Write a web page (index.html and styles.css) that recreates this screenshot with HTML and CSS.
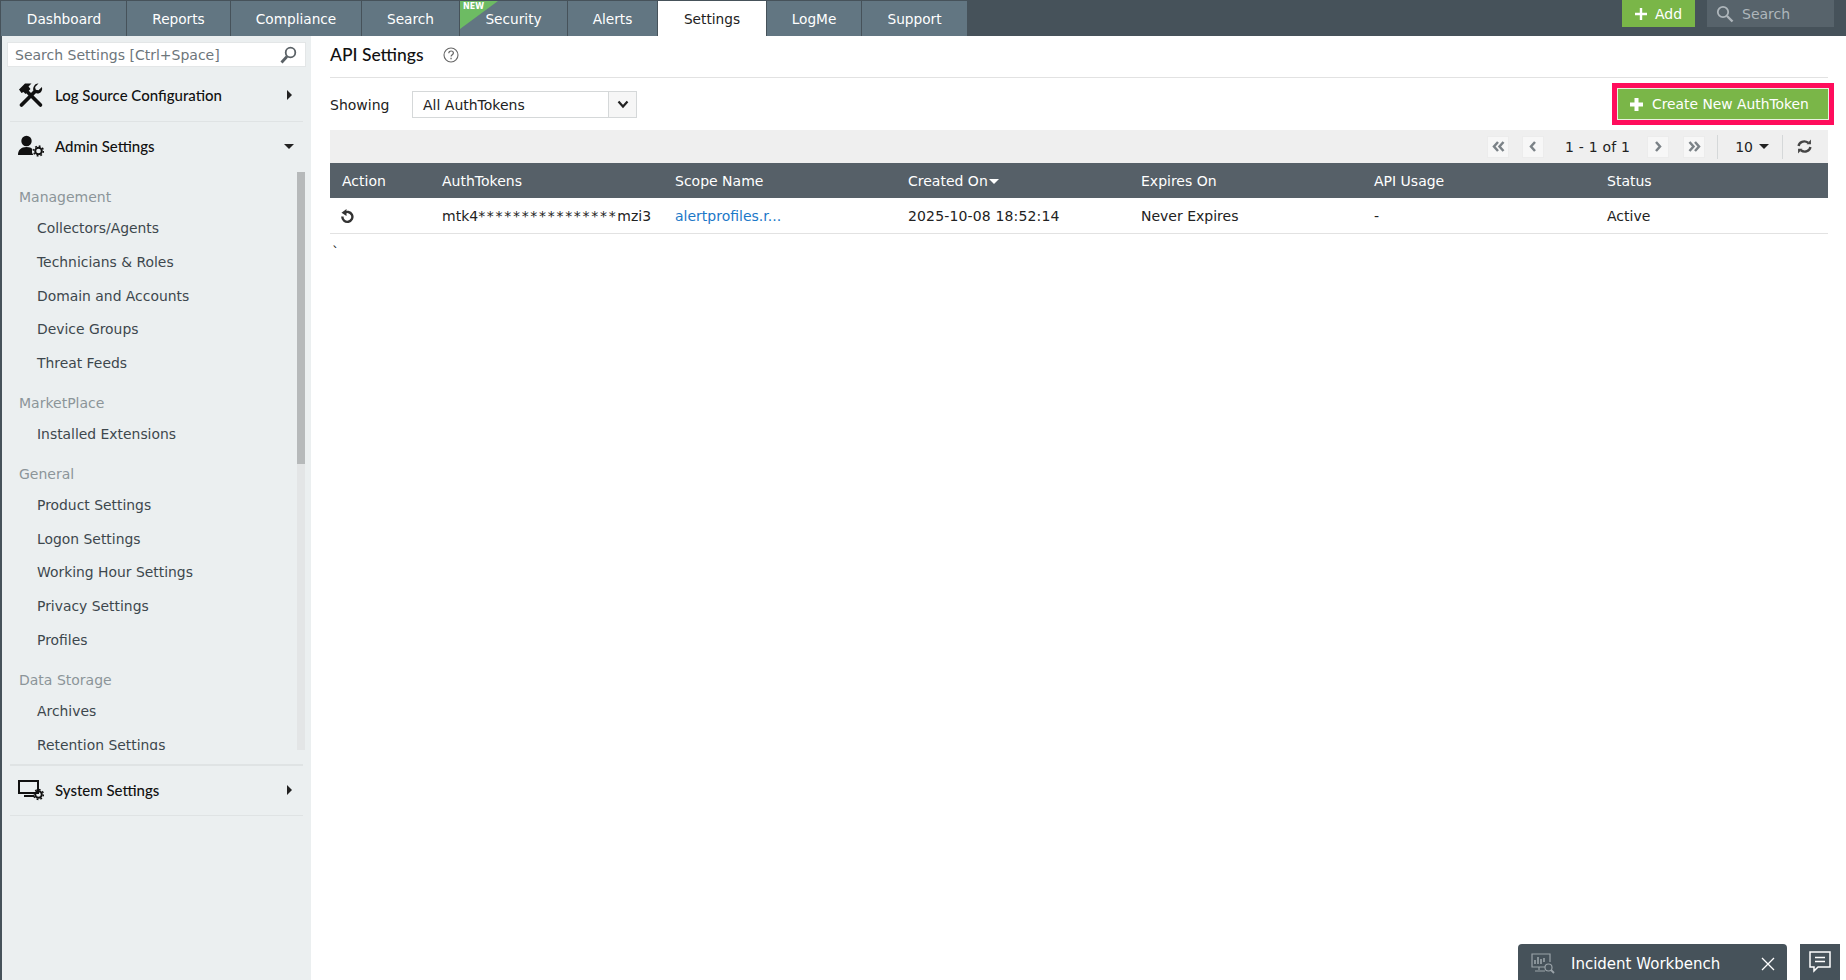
FILE: index.html
```html
<!DOCTYPE html>
<html lang="en">
<head>
    <meta charset="UTF-8">
    <meta name="viewport" content="width=device-width, initial-scale=1.0">
    <title>API Settings</title>
    <link rel="stylesheet" href="styles.css">
</head>
<body>
    <div class="topbar">
        <div class="tabs">
            <div class="tab t-dashboard">Dashboard</div>
            <div class="tab t-reports">Reports</div>
            <div class="tab t-compliance">Compliance</div>
            <div class="tab t-search">Search</div>
            <div class="tab t-security">
                <svg class="new-flag" width="38" height="28" viewBox="0 0 38 28"><path d="M0 0H38L0 28Z" fill="#6dbb63"/></svg>
                <span class="new-text">NEW</span>
                Security
            </div>
            <div class="tab t-alerts">Alerts</div>
            <div class="tab t-settings active">Settings</div>
            <div class="tab t-logme">LogMe</div>
            <div class="tab t-support">Support</div>
        </div>
        <div class="top-actions">
            <div class="add-btn">
                <svg width="12" height="12" viewBox="0 0 12 12"><path d="M4.800 0h2.400v4.800H12v2.400H7.200V12H4.800V7.200H0V4.800h4.800z" fill="#fff"/></svg>
                <span>Add</span>
            </div>
            <div class="top-search">
                <svg width="18" height="18" viewBox="0 0 18 18" fill="none" stroke="#aeb6bb" stroke-width="1.800"><circle cx="7" cy="7" r="5.200"/><path d="M11 11l5.500 5.500" stroke-width="2.400"/></svg>
                <span>Search</span>
            </div>
        </div>
    </div>

    <div class="page">
        <div class="sidebar">
            <div class="side-search">
                <span>Search Settings [Ctrl+Space]</span>
                <svg width="17" height="18" viewBox="0 0 17 18" fill="none" stroke="#5a6166"><circle cx="10.500" cy="6.500" r="4.800" stroke-width="1.800"/><path d="M7 10.500L1.500 16.500" stroke-width="2.800"/></svg>
            </div>

            <div class="side-head first">
                <svg class="side-icon" width="26" height="26" viewBox="0 0 26 26">
                    <path d="M1 7.500L7 1.500h6.500L10.500 4.500l2 2.500-5 5-2-2-2 1z" fill="#111"/>
                    <path d="M9 9.500L22.500 23" stroke="#111" stroke-width="3.600" stroke-linecap="round"/>
                    <path d="M3.500 23L17 9.500" stroke="#111" stroke-width="3.800" stroke-linecap="round"/>
                    <path d="M20.500 1.500l-3.400 3.400.6 2.800 2.800.6 3.400-3.400c1 3.400-1.300 7-5.200 6.600l-3.500-3.500c-.4-3.900 2.600-7 5.300-6.500z" fill="#111"/>
                </svg>
                <span class="side-title">Log Source Configuration</span>
                <span class="arrow-right"></span>
            </div>
            <div class="side-head second">
                <svg class="side-icon" width="26" height="22" viewBox="0 0 26 22"><circle cx="8.500" cy="6" r="5.200" fill="#111"/><path d="M0 20c0-5 3-8 8.500-8 3 0 4.800.8 6 2.200-1 2.300-.5 4.300 1 5.800H0z" fill="#111"/><circle cx="20.500" cy="16" r="3.300" fill="none" stroke="#111" stroke-width="2"/><circle cx="20.500" cy="16" r="4.900" fill="none" stroke="#111" stroke-width="1.500" stroke-dasharray="1.800 2"/></svg>
                <span class="side-title">Admin Settings</span>
                <span class="arrow-down"></span>
            </div>

            <div class="side-scroll">
                <div class="side-list">
                    <div class="group-label g-first">Management</div>
                    <div class="side-link">Collectors/Agents</div>
                    <div class="side-link">Technicians &amp; Roles</div>
                    <div class="side-link">Domain and Accounts</div>
                    <div class="side-link">Device Groups</div>
                    <div class="side-link">Threat Feeds</div>
                    <div class="group-label">MarketPlace</div>
                    <div class="side-link">Installed Extensions</div>
                    <div class="group-label">General</div>
                    <div class="side-link">Product Settings</div>
                    <div class="side-link">Logon Settings</div>
                    <div class="side-link">Working Hour Settings</div>
                    <div class="side-link">Privacy Settings</div>
                    <div class="side-link">Profiles</div>
                    <div class="group-label">Data Storage</div>
                    <div class="side-link">Archives</div>
                    <div class="side-link">Retention Settings</div>
                </div>
                <div class="scroll-track"><div class="scroll-thumb"></div></div>
            </div>

            <div class="side-head third">
                <svg class="side-icon" width="26" height="22" viewBox="0 0 26 22"><path d="M1 2h19v12H1z" fill="none" stroke="#111" stroke-width="2"/><path d="M6 16h10v2H6z" fill="#111"/><circle cx="20.500" cy="15.500" r="3.300" fill="none" stroke="#111" stroke-width="2"/><circle cx="20.500" cy="15.500" r="4.900" fill="none" stroke="#111" stroke-width="1.500" stroke-dasharray="1.800 2"/></svg>
                <span class="side-title">System Settings</span>
                <span class="arrow-right"></span>
            </div>
        </div>

        <div class="main">
            <div class="title-row">
                <h1>API Settings</h1>
                <svg width="16" height="16" viewBox="0 0 16 16" fill="none"><circle cx="8" cy="8" r="7" stroke="#666" stroke-width="1.100"/><path d="M5.800 6.200c0-3 4.600-2.800 4.600-.2 0 1.700-2.300 1.800-2.300 3.500" stroke="#666" stroke-width="1.200"/><path d="M7.400 10.800h1.300v1.400H7.400z" fill="#666"/></svg>
            </div>

            <div class="filter-row">
                <span class="showing">Showing</span>
                <div class="select-box">
                    <span class="select-value">All AuthTokens</span>
                    <span class="select-btn">
                        <svg width="12" height="9" viewBox="0 0 12 9" fill="none"><path d="M1.500 1.500L6 6.500l4.500-5" stroke="#222" stroke-width="2.200"/></svg>
                    </span>
                </div>
                <div class="create-wrap">
                    <div class="create-btn">
                        <svg width="13" height="13" viewBox="0 0 13 13"><path d="M4.500 0h4v4.500H13v4H8.500V13h-4V8.500H0v-4h4.500z" fill="#fff"/></svg>
                        <span>Create New AuthToken</span>
                    </div>
                </div>
            </div>

            <div class="pager">
                <span class="page-btn"><svg width="13" height="11" viewBox="0 0 13 11" fill="none" stroke="#7b8287" stroke-width="2.500"><path d="M6 1L2 5.500l4 4.500M11.500 1l-4 4.500 4 4.500"/></svg></span>
                <span class="page-btn prev"><svg width="8" height="11" viewBox="0 0 8 11" fill="none" stroke="#7b8287" stroke-width="2.500"><path d="M6 1L2 5.500l4 4.500"/></svg></span>
                <span class="page-count">1 - 1 of 1</span>
                <span class="page-btn gap-next"><svg width="8" height="11" viewBox="0 0 8 11" fill="none" stroke="#7b8287" stroke-width="2.500"><path d="M2 1l4 4.500-4 4.500"/></svg></span>
                <span class="page-btn next"><svg width="13" height="11" viewBox="0 0 13 11" fill="none" stroke="#7b8287" stroke-width="2.500"><path d="M1.500 1l4 4.500-4 4.500M7 1l4 4.500-4 4.500"/></svg></span>
                <span class="page-sep"></span>
                <span class="page-size">10</span>
                <span class="caret-dark"></span>
                <span class="page-sep sep2"></span>
                <svg class="refresh" width="15" height="15" viewBox="0 0 14 14" fill="none" stroke="#444" stroke-width="2.200"><path d="M1.500 6.500C2 3 6.500.8 10.500 3.500"/><path d="M12.500 7.500c-.5 3.500-5 5.700-9 3"/><path d="M9 5l4-.2V.5zM5 9l-4 .2v4.300z" fill="#444" stroke="none"/></svg>
            </div>

            <table class="token-table">
                <thead>
                    <tr>
                        <th class="col-action">Action</th>
                        <th>AuthTokens</th>
                        <th>Scope Name</th>
                        <th>Created On<span class="caret-white"></span></th>
                        <th>Expires On</th>
                        <th>API Usage</th>
                        <th>Status</th>
                    </tr>
                </thead>
                <tbody>
                    <tr>
                        <td class="col-action">
                            <svg class="undo" width="14" height="15" viewBox="0 0 14 15" fill="none"><path d="M4 4.200a5 5 0 1 1-1.600 3.300" stroke="#333" stroke-width="2.400"/><path d="M6.500 0v7L1.500 3.800z" fill="#333"/></svg>
                        </td>
                        <td>mtk4<span class="stars">****************</span>mzi3</td>
                        <td><span class="link">alertprofiles.r...</span></td>
                        <td class="date">2025-10-08 18:52:14</td>
                        <td>Never Expires</td>
                        <td>-</td>
                        <td>Active</td>
                    </tr>
                </tbody>
            </table>
            <div class="stray">`</div>
        </div>
    </div>

    <div class="workbench">
        <svg width="24" height="22" viewBox="0 0 24 22" fill="none" stroke="#9aa3a8" stroke-width="1.200"><path d="M14 14H1V1h18v8"/><path d="M4 11V7M7 11V4M10 11V6M13 9V5" stroke-width="1.600"/><path d="M8 14v3M4 18h10"/><circle cx="17.500" cy="14.500" r="3.500"/><path d="M20 17l3 3" stroke-width="1.800"/></svg>
        <span class="wb-title">Incident Workbench</span>
        <svg width="14" height="14" viewBox="0 0 14 14" stroke="#fff" stroke-width="1.300"><path d="M1 1l12 12M13 1L1 13"/></svg>
    </div>
    <div class="chat-box">
        <svg width="24" height="24" viewBox="0 0 24 24" fill="none" stroke="#fff" stroke-width="1.500"><path d="M2 2h20v15H10l-4 4v-4H2z"/><path d="M7 7.500h10M7 11.500h10"/></svg>
    </div>
</body>
</html>
```

FILE: styles.css
```css
* {
    margin: 0;
    padding: 0;
    box-sizing: border-box;
}

html, body {
    height: 100%;
    overflow: hidden;
}

body {
    font-family: 'DejaVu Sans', Verdana, sans-serif;
    font-size: 14px;
    color: #222;
    background: white;
    display: flex;
    flex-direction: column;
}

/* top bar */
.topbar {
    height: 36px;
    flex: none;
    background: #46525a;
    display: flex;
    justify-content: space-between;
    padding-left: 1px;
}

.tabs {
    display: flex;
    padding-top: 1px;
}

.tab {
    position: relative;
    background: #627682;
    color: white;
    margin-right: 1px;
    display: flex;
    align-items: center;
    justify-content: center;
    font-size: 13.7px;
    padding-top: 1px;
}

.t-dashboard { width: 125px; padding-left: 1px; }
.t-reports { width: 103px; }
.t-compliance { width: 130px; }
.t-search { width: 97px; }
.t-security { width: 107px; }
.t-alerts { width: 89px; }
.t-settings { width: 108px; }
.t-logme { width: 94px; }
.t-support { width: 105px; margin-right: 0; }

.tab.active {
    background: white;
    color: #222;
}

.new-flag {
    position: absolute;
    left: 0;
    top: 0;
}

.new-text {
    position: absolute;
    left: 3px;
    top: 1px;
    font-size: 8px;
    font-weight: bold;
    color: white;
}

.top-actions {
    display: flex;
    align-items: flex-start;
    padding-right: 12px;
}

.add-btn {
    width: 73px;
    height: 27px;
    background: #7ab648;
    color: white;
    display: flex;
    align-items: center;
    justify-content: center;
    gap: 8px;
    margin-right: 12px;
}

.top-search {
    width: 127px;
    height: 27px;
    background: #57636b;
    color: #aeb6bb;
    display: flex;
    align-items: center;
    gap: 8px;
    padding-left: 9px;
}

/* sidebar */
.page {
    flex: 1;
    display: flex;
    min-height: 0;
}

.sidebar {
    width: 311px;
    flex: none;
    background: #ebeff0;
    border-left: 2px solid #46525a;
    padding: 6px 5px 0 5px;
}

.side-search {
    height: 25px;
    background: white;
    border: 1px solid #e3e6e7;
    color: #6d767b;
    display: flex;
    align-items: center;
    justify-content: space-between;
    padding: 0 8px 0 7px;
}

.side-head {
    display: flex;
    align-items: center;
    margin: 0 3px 0 3px;
    height: 43px;
    padding: 0 8px 0 8px;
}

.side-head.first {
    height: 55px;
    padding-top: 1px;
    border-bottom: 1px solid #dfe3e4;
}

.side-head.second {
    height: 50px;
    padding-bottom: 2px;
}

.side-head.third {
    height: 52px;
    border-top: 2px solid #dfe3e4;
    border-bottom: 1px solid #dfe3e4;
    margin-top: 14px;
    padding-bottom: 2px;
}

.side-icon {
    flex: none;
    margin-right: 11px;
}

.side-title {
    flex: 1;
    font-family: Lato, sans-serif;
    font-size: 15px;
    font-weight: 500;
    color: #111;
}

.arrow-right {
    width: 0;
    height: 0;
    border-left: 5px solid #222;
    border-top: 5px solid transparent;
    border-bottom: 5px solid transparent;
    margin-right: 3px;
}

.arrow-down {
    width: 0;
    height: 0;
    border-top: 5px solid #222;
    border-left: 5px solid transparent;
    border-right: 5px solid transparent;
    margin-right: 1px;
}

.side-scroll {
    display: flex;
    justify-content: space-between;
    height: 578px;
    padding-right: 1px;
}

.side-list {
    flex: 1;
    overflow: hidden;
    padding-left: 12px;
}

.group-label {
    color: #8c9599;
    height: 24px;
    line-height: 24px;
    margin-top: 10px;
    margin-bottom: 3px;
}

.group-label.g-first {
    margin-top: 13px;
}

.side-link {
    color: #3d474d;
    height: 33.800px;
    line-height: 33.800px;
    padding-left: 18px;
    font-size: 13.900px;
}

.scroll-track {
    width: 8px;
    flex: none;
    background: #e3e5e6;
}

.scroll-thumb {
    height: 292px;
    background: #b6b9ba;
}

/* main area */
.main {
    flex: 1;
    min-width: 0;
    padding: 0 18px 0 19px;
}

.title-row {
    height: 42px;
    border-bottom: 1px solid #e2e2e2;
    display: flex;
    align-items: center;
    gap: 19px;
    padding-bottom: 4px;
}

.title-row h1 {
    font-family: Lato, sans-serif;
    font-size: 17.500px;
    font-weight: 500;
    color: #111;
}

.filter-row {
    height: 52px;
    display: flex;
    align-items: center;
}

.showing {
    width: 82px;
    padding-top: 1px;
}

.select-box {
    width: 225px;
    height: 27px;
    border: 1px solid #d5d8d9;
    display: flex;
}

.select-value {
    flex: 1;
    line-height: 26px;
    padding-left: 10px;
}

.select-btn {
    width: 28px;
    border-left: 1px solid #d5d8d9;
    background: #f6f6f6;
    display: flex;
    align-items: center;
    justify-content: center;
}

.create-wrap {
    margin-left: auto;
    margin-right: -6px;
    padding: 5px 5px;
    background: #ff0d5c;
}

.create-btn {
    width: 212px;
    height: 32px;
    background: #7ab648;
    border: 1px solid #e8f2de;
    color: white;
    display: flex;
    align-items: center;
    gap: 9px;
    padding-left: 12px;
    font-size: 13.850px;
}

.pager {
    height: 33px;
    background: #efefef;
    display: flex;
    align-items: center;
    justify-content: flex-end;
    padding-right: 16px;
}

.page-btn {
    width: 22px;
    height: 22px;
    background: #f7f7f7;
    border: 1px solid #ececec;
    display: flex;
    align-items: center;
    justify-content: center;
    margin-right: 13px;
}

.page-btn.prev {
    margin-right: 21px;
}

.page-btn.gap-next {
    margin-right: 14px;
}

.page-btn.next {
    margin-right: 12px;
}

.page-count {
    margin-right: 17px;
    letter-spacing: 0.200px;
}

.page-sep {
    width: 1px;
    height: 24px;
    background: #d5d8d9;
    margin-right: 17px;
}

.page-sep.sep2 {
    margin-left: 13px;
    margin-right: 14px;
}

.caret-dark {
    width: 0;
    height: 0;
    border-top: 5px solid #222;
    border-left: 5px solid transparent;
    border-right: 5px solid transparent;
    margin-left: 6px;
}

.token-table {
    width: 100%;
    border-collapse: collapse;
    table-layout: fixed;
}

.token-table th {
    background: #566068;
    color: white;
    font-weight: normal;
    text-align: left;
    height: 35px;
    padding: 0 0 0 12px;
    width: 233px;
}

.token-table th:first-child {
    width: 100px;
}

.token-table td {
    height: 35px;
    padding: 2px 0 0 12px;
    border-bottom: 1px solid #e2e2e2;
    color: #222;
}

.stars {
    letter-spacing: 1.700px;
}

.date {
    letter-spacing: 0.150px;
}

.undo {
    display: block;
    margin-left: -2px;
}

.link {
    color: #1b78c8;
}

.caret-white {
    display: inline-block;
    vertical-align: middle;
    margin-left: 1px;
    width: 0;
    height: 0;
    border-top: 5px solid white;
    border-left: 5px solid transparent;
    border-right: 5px solid transparent;
}

.stray {
    padding: 10px 0 0 2px;
}

/* bottom right widgets */
.workbench {
    position: absolute;
    left: 1518px;
    top: 944px;
    width: 269px;
    height: 36px;
    background: #46525a;
    border-radius: 4px 4px 0 0;
    color: white;
    display: flex;
    align-items: center;
    padding: 3px 12px 0 13px;
}

.wb-title {
    flex: 1;
    font-size: 15px;
    padding-left: 16px;
}

.chat-box {
    position: absolute;
    left: 1800px;
    top: 944px;
    width: 40px;
    height: 36px;
    background: #46525a;
    display: flex;
    align-items: center;
    justify-content: center;
}
```
